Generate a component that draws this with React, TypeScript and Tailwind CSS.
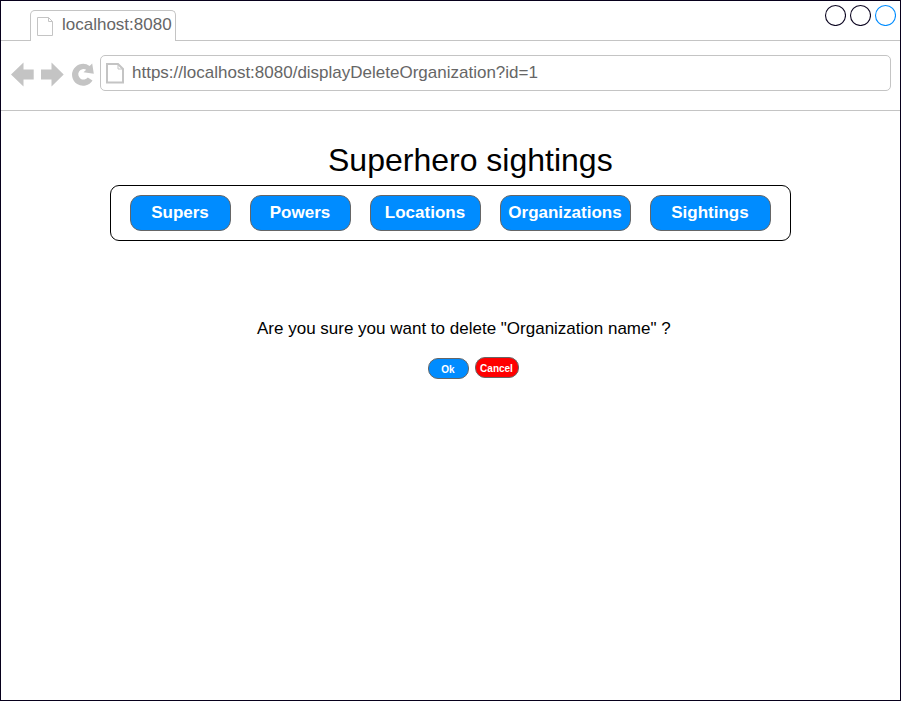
import React from "react";

const navItems = [
  { label: "Supers", width: "w-[101px]" },
  { label: "Powers", width: "w-[101px]" },
  { label: "Locations", width: "w-[111px]" },
  { label: "Organizations", width: "w-[131px]" },
  { label: "Sightings", width: "w-[121px]" },
];

function TabStrip() {
  return (
    <div className="flex h-10">
      <div className="w-[29px] border-b border-[#c4c4c4]" />
      <div className="mt-[9px] flex w-[146px] rounded-t-[5px] border-x border-t border-[#c4c4c4] text-[#666666]">
        <svg className="mt-[6px] ml-[6px] shrink-0" width="17" height="19" viewBox="0 0 17 19" fill="none" stroke="#c4c4c4">
          <path d="M0.5 0.5H11.5L15.5 4.5V18.5H0.5ZM11.5 0.5V4.5H15.5" />
        </svg>
        <span className="ml-[8px] mt-[2px] whitespace-nowrap text-[17px] leading-6">localhost:8080</span>
      </div>
      <div className="flex flex-1 justify-end gap-[3px] border-b border-[#c4c4c4] pt-[3px] pr-[4px]">
        <Circle color="#0c0621" />
        <Circle color="#0c0621" />
        <Circle color="#008cff" />
      </div>
    </div>
  );
}

function Circle({ color }: { color: string }) {
  return (
    <svg width="22" height="22" viewBox="0 0 22 22" fill="none" stroke={color} strokeWidth="1.1">
      <circle cx="11.5" cy="11.5" r="10" />
    </svg>
  );
}

function Toolbar() {
  return (
    <div className="flex h-[70px] border-b border-[#c4c4c4] pt-[14px] pl-[9px]">
      <svg className="shrink-0" width="90" height="36" viewBox="10 55 90 36" fill="#c4c4c4">
        <path d="M11 74.5L23.5 62.5V69.5H33.7V79.5H23.5V86.5Z" />
        <path d="M63.7 74.5L51.5 62.5V69.5H41V79.5H51.5V86.5Z" />
        <path d="M89.6 66L92.2 63.6L93.8 73.8L83.5 72.3L86.2 69.7A5.3 5.3 0 1 0 87.8 77.5L92.5 80.5A11 11 0 1 1 89.6 66Z" />
      </svg>
      <div className="flex h-9 w-[791px] rounded-[5px] border border-[#c4c4c4] text-[#666666]">
        <svg className="mt-[7px] ml-[5px] shrink-0" width="18" height="21" viewBox="0 0 18 21" fill="none" stroke="#c4c4c4">
          <path strokeWidth="2" d="M1 1H12L17 6V19.5H1Z" />
          <path d="M12 1V6H17" />
        </svg>
        <span className="ml-[8px] mt-[5px] whitespace-nowrap text-[17px] leading-6">
          https://localhost:8080/displayDeleteOrganization?id=1
        </span>
      </div>
    </div>
  );
}

export default function App() {
  return (
    <div className="flex h-[701px] w-[901px] flex-col overflow-hidden border border-[#07001b] bg-white font-['Liberation_Sans',Arial,sans-serif] text-black">
      <TabStrip />
      <Toolbar />
      <main className="flex flex-col">
        <h1 className="mt-[29px] ml-[327px] whitespace-nowrap text-[32px] leading-10">Superhero sightings</h1>
        <nav className="mt-[5px] ml-[109px] flex h-14 w-[681px] gap-[19px] rounded-[9px] border border-black pt-[9px] pl-[19px]">
          {navItems.map((item) => (
            <button
              key={item.label}
              className={`${item.width} h-9 rounded-[11px] border border-[#666666] bg-[#008cff] pr-px pb-[2px] text-[17px] leading-none font-bold whitespace-nowrap text-white`}
            >
              {item.label}
            </button>
          ))}
        </nav>
        <p className="mt-[76px] ml-[256px] whitespace-nowrap text-[17px] leading-6">
          Are you sure you want to delete "Organization name" ?
        </p>
        <div className="mt-[16px] ml-[427px] flex gap-[6px]">
          <button className="mt-px h-[21px] w-[41px] rounded-[10px] border border-[#666666] bg-[#008cff] pt-[2px] pr-px text-[10px] leading-none font-bold text-white">
            Ok
          </button>
          <button className="h-[21px] w-[44px] rounded-[10px] border border-[#666666] bg-[#ff0000] pt-[2px] pr-px text-[10px] leading-none font-bold text-white">
            Cancel
          </button>
        </div>
      </main>
    </div>
  );
}
